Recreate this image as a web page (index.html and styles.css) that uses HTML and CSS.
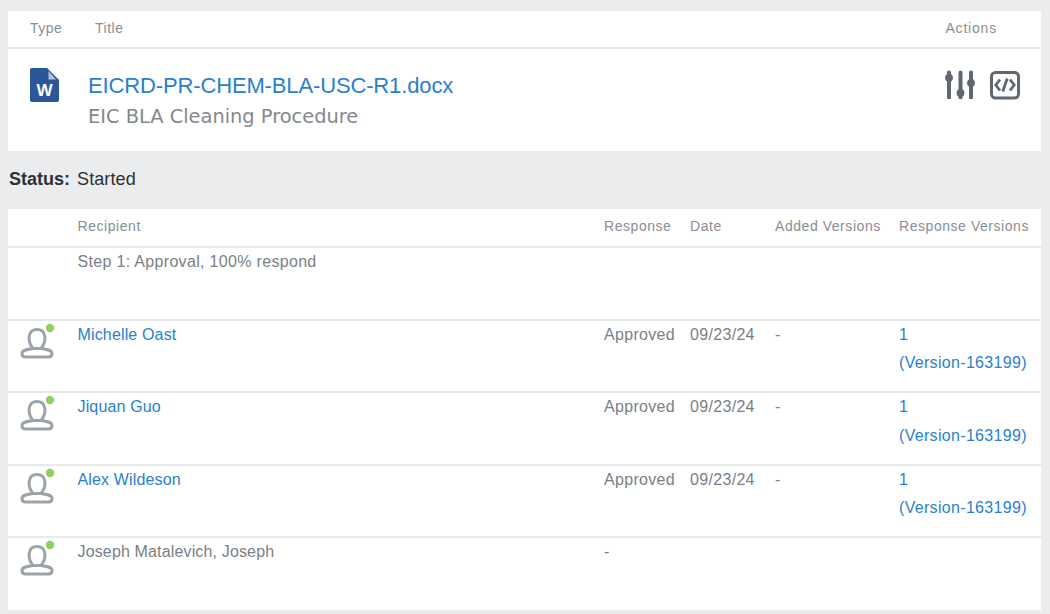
FILE: index.html
```html
<!DOCTYPE html>
<html lang="en">
<head>
<meta charset="utf-8">
<title>Document review</title>
<link rel="stylesheet" href="styles.css">
</head>
<body>
<section class="card doc">
  <div class="doc-head">
    <span class="col-type">Type</span>
    <span class="col-title">Title</span>
    <span class="col-actions">Actions</span>
  </div>
  <div class="doc-body">
    <svg class="word" viewBox="0 0 29 34" aria-hidden="true">
      <path d="M2 0H17L29 12V32a2 2 0 0 1-2 2H2a2 2 0 0 1-2-2V2a2 2 0 0 1 2-2Z" fill="#2b579a"/>
      <path d="M18.500 3L26 11.500H18.500Z" fill="#b4c4dc"/>
      <text x="14.500" y="27.500" class="word-w">W</text>
    </svg>
    <div class="doc-text">
      <a class="doc-name">EICRD-PR-CHEM-BLA-USC-R1.docx</a>
      <div class="doc-sub">EIC BLA Cleaning Procedure</div>
    </div>
    <div class="actions">
      <svg class="act-sliders" viewBox="0 0 30 30" aria-hidden="true">
        <path d="M4 3.500V28.500M15.500 3.500V28.500M26 3.500V28.500" stroke="#5f6770" stroke-width="4" stroke-linecap="round" fill="none"/>
        <circle cx="4" cy="8.700" r="3.900" fill="#5f6770"/>
        <circle cx="15.500" cy="24" r="3.900" fill="#5f6770"/>
        <circle cx="26" cy="14" r="3.900" fill="#5f6770"/>
      </svg>
      <svg class="act-code" viewBox="0 0 30 32" aria-hidden="true">
        <rect x="1.500" y="3.500" width="27" height="25.500" rx="4" stroke="#5f6770" stroke-width="3" fill="none"/>
        <path d="M10 10.500L5.800 16L10 21.500M20 10.500L24.200 16L20 21.500M17.200 9.500L12.800 22.500" stroke="#5f6770" stroke-width="2.800" fill="none"/>
      </svg>
    </div>
  </div>
</section>

<p class="status"><b>Status:</b> <span class="status-val">Started</span></p>

<section class="card">
  <table class="steps">
    <thead>
      <tr>
        <th class="c-icon"></th>
        <th class="c-rec">Recipient</th>
        <th class="c-resp">Response</th>
        <th class="c-date">Date</th>
        <th class="c-add">Added Versions</th>
        <th class="c-ver">Response Versions</th>
      </tr>
    </thead>
    <tbody>
      <tr class="step">
        <td></td>
        <td colspan="5">Step 1: Approval, 100% respond</td>
      </tr>
      <tr>
        <td class="avatar"><svg class="user" viewBox="0 0 36 36" aria-hidden="true"><path d="M14 25.500C8 18 8.500 6.500 18 6.500C27.500 6.500 28 18 22 25.500M3 30.500C3 27 8 26.500 14 25.500H22C28 26.500 33 27 33 30.500C33 33 31.500 34 29.500 34H6.500C4.500 34 3 33 3 30.500Z" fill="none" stroke="#9ca3a9" stroke-width="3"/><circle cx="31" cy="5" r="4.200" fill="#8fd05f"/></svg></td>
        <td><a class="name">Michelle Oast</a></td>
        <td>Approved</td>
        <td>09/23/24</td>
        <td>-</td>
        <td><a>1<br>(Version-163199)</a></td>
      </tr>
      <tr>
        <td class="avatar"><svg class="user" viewBox="0 0 36 36" aria-hidden="true"><path d="M14 25.500C8 18 8.500 6.500 18 6.500C27.500 6.500 28 18 22 25.500M3 30.500C3 27 8 26.500 14 25.500H22C28 26.500 33 27 33 30.500C33 33 31.500 34 29.500 34H6.500C4.500 34 3 33 3 30.500Z" fill="none" stroke="#9ca3a9" stroke-width="3"/><circle cx="31" cy="5" r="4.200" fill="#8fd05f"/></svg></td>
        <td><a class="name">Jiquan Guo</a></td>
        <td>Approved</td>
        <td>09/23/24</td>
        <td>-</td>
        <td><a>1<br>(Version-163199)</a></td>
      </tr>
      <tr>
        <td class="avatar"><svg class="user" viewBox="0 0 36 36" aria-hidden="true"><path d="M14 25.500C8 18 8.500 6.500 18 6.500C27.500 6.500 28 18 22 25.500M3 30.500C3 27 8 26.500 14 25.500H22C28 26.500 33 27 33 30.500C33 33 31.500 34 29.500 34H6.500C4.500 34 3 33 3 30.500Z" fill="none" stroke="#9ca3a9" stroke-width="3"/><circle cx="31" cy="5" r="4.200" fill="#8fd05f"/></svg></td>
        <td><a class="name">Alex Wildeson</a></td>
        <td>Approved</td>
        <td>09/23/24</td>
        <td>-</td>
        <td><a>1<br>(Version-163199)</a></td>
      </tr>
      <tr class="last">
        <td class="avatar"><svg class="user" viewBox="0 0 36 36" aria-hidden="true"><path d="M14 25.500C8 18 8.500 6.500 18 6.500C27.500 6.500 28 18 22 25.500M3 30.500C3 27 8 26.500 14 25.500H22C28 26.500 33 27 33 30.500C33 33 31.500 34 29.500 34H6.500C4.500 34 3 33 3 30.500Z" fill="none" stroke="#9ca3a9" stroke-width="3"/><circle cx="31" cy="5" r="4.200" fill="#8fd05f"/></svg></td>
        <td class="name">Joseph Matalevich, Joseph</td>
        <td>-</td>
        <td></td>
        <td></td>
        <td></td>
      </tr>
    </tbody>
  </table>
</section>
</body>
</html>
```
FILE: styles.css
```css
* { box-sizing: border-box; }
html, body { height: 100%; }
body {
  margin: 0;
  padding: 11px 9px 0 8px;
  background: #ebecee;
  font-family: "Liberation Sans", Arial, sans-serif;
  font-size: 16px;
  color: #7a7f85;
  overflow: hidden;
}
a { color: #2a7fd0; text-decoration: none; }
.card { background: #fff; }

.doc { height: 140px; }
.doc-head {
  display: flex;
  height: 38px;
  padding: 9px 44px 0 22px;
  border-bottom: 2px solid #e8e9eb;
  font-size: 14px;
  letter-spacing: 0.5px;
  color: #8a8e93;
}
.col-type { width: 65px; }
.col-title { flex: 1; }
.col-actions { letter-spacing: 0.8px; }
.doc-body {
  display: flex;
  align-items: flex-start;
  padding: 19px 21px 0 22px;
}
.word { width: 29px; height: 34px; flex: none; }
.word-w { font: bold 17px "Liberation Sans", sans-serif; fill: #fff; text-anchor: middle; }
.doc-text { flex: 1; margin: 1px 0 0 29px; }
.doc-name { display: block; font-size: 22px; line-height: 33px; letter-spacing: -0.14px; }
.doc-sub {
  font-family: "DejaVu Sans", Verdana, sans-serif;
  font-size: 19.400px;
  line-height: 29px;
  color: #84888d;
}
.actions { display: flex; gap: 15px; margin-top: 1px; }
.act-sliders { width: 30px; height: 30px; flex: none; }
.act-code { width: 30px; height: 32px; flex: none; }

.status {
  margin: 0;
  height: 58px;
  padding: 17px 0 0 1px;
  font-size: 18px;
  line-height: 22px;
  color: #2e3033;
}
.status-val { margin-left: 2px; letter-spacing: 0.1px; }

.steps {
  width: 100%;
  table-layout: fixed;
  border-collapse: collapse;
}
.c-icon { width: 69.500px; }
.c-resp { width: 86px; }
.c-date { width: 85px; }
.c-add { width: 124px; }
.c-ver { width: 142px; }
th {
  height: 38px;
  padding: 0 0 3px;
  border-bottom: 2px solid #e8e9eb;
  text-align: left;
  font-weight: normal;
  font-size: 14px;
  letter-spacing: 0.55px;
  color: #8a8e93;
}
td {
  height: 72.500px;
  padding: 0;
  vertical-align: top;
  line-height: 28.750px;
  letter-spacing: 0.32px;
  border-bottom: 2px solid #e8e9eb;
}
td.name, a.name { letter-spacing: 0.15px; }
.last td { border-bottom: 0; }
.avatar { padding: 0; }
.user { display: block; width: 36px; height: 36px; margin: 2px 0 0 11px; }
```
